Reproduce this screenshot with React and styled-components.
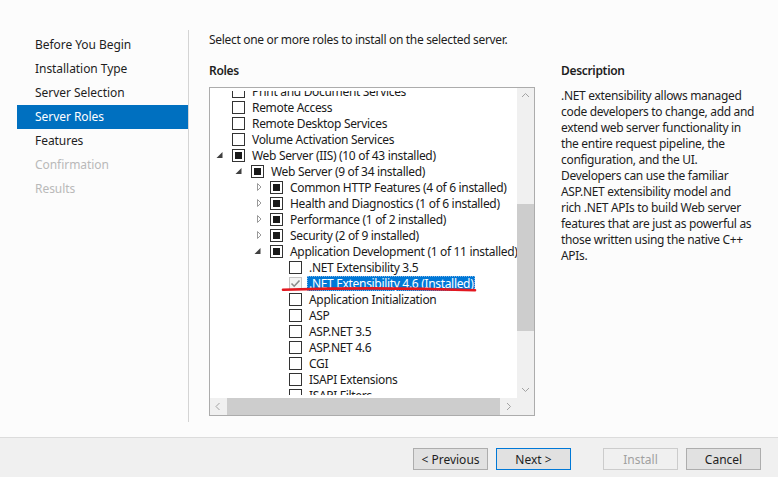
import styled, { createGlobalStyle } from "styled-components";

const GlobalStyle = createGlobalStyle`
  html, body {
    margin: 0;
    padding: 0;
  }
  body {
    background: #fcfcfc;
    font-family: "Noto Sans", "Liberation Sans", sans-serif;
    font-size: 12px;
    letter-spacing: -0.32px;
    color: #1e1e1e;
  }
`;

const steps = [
  { label: "Before You Begin" },
  { label: "Installation Type" },
  { label: "Server Selection" },
  { label: "Server Roles", active: true },
  { label: "Features" },
  { label: "Confirmation", disabled: true },
  { label: "Results", disabled: true },
];

// depth, expander ("open" | "closed" | none), check ("none" | "partial" | "done")
const roles = [
  { depth: 0, check: "none", label: "Print and Document Services" },
  { depth: 0, check: "none", label: "Remote Access" },
  { depth: 0, check: "none", label: "Remote Desktop Services" },
  { depth: 0, check: "none", label: "Volume Activation Services" },
  { depth: 0, exp: "open", check: "partial", label: "Web Server (IIS) (10 of 43 installed)" },
  { depth: 1, exp: "open", check: "partial", label: "Web Server (9 of 34 installed)" },
  { depth: 2, exp: "closed", check: "partial", label: "Common HTTP Features (4 of 6 installed)" },
  { depth: 2, exp: "closed", check: "partial", label: "Health and Diagnostics (1 of 6 installed)" },
  { depth: 2, exp: "closed", check: "partial", label: "Performance (1 of 2 installed)" },
  { depth: 2, exp: "closed", check: "partial", label: "Security (2 of 9 installed)" },
  { depth: 2, exp: "open", check: "partial", label: "Application Development (1 of 11 installed)" },
  { depth: 3, check: "none", label: ".NET Extensibility 3.5" },
  { depth: 3, check: "done", label: ".NET Extensibility 4.6 (Installed)", selected: true },
  { depth: 3, check: "none", label: "Application Initialization" },
  { depth: 3, check: "none", label: "ASP" },
  { depth: 3, check: "none", label: "ASP.NET 3.5" },
  { depth: 3, check: "none", label: "ASP.NET 4.6" },
  { depth: 3, check: "none", label: "CGI" },
  { depth: 3, check: "none", label: "ISAPI Extensions" },
  { depth: 3, check: "none", label: "ISAPI Filters" },
];

const description = [
  ".NET extensibility allows managed",
  "code developers to change, add and",
  "extend web server functionality in",
  "the entire request pipeline, the",
  "configuration, and the UI.",
  "Developers can use the familiar",
  "ASP.NET extensibility model and",
  "rich .NET APIs to build Web server",
  "features that are just as powerful as",
  "those written using the native C++",
  "APIs.",
];

function Expander({ kind }) {
  return (
    <ExpSlot>
      {kind === "open" && (
        <svg width="19" height="16" viewBox="0 0 19 16">
          <polygon points="9.5,5 9.5,11 3.5,11" fill="#404040" />
        </svg>
      )}
      {kind === "closed" && (
        <svg width="19" height="16" viewBox="0 0 19 16">
          <polygon points="6.5,4.5 10,8 6.5,11.5" fill="none" stroke="#9a9a9a" />
        </svg>
      )}
    </ExpSlot>
  );
}

function Chevron({ dir }) {
  const pts = {
    up: "5,9 8.5,5.5 12,9",
    down: "5,7 8.5,10.5 12,7",
    left: "9.5,5 6,8.5 9.5,12",
    right: "7,5 10.5,8.5 7,12",
  }[dir];
  return (
    <svg width="17" height="17" viewBox="0 0 17 17">
      <polyline points={pts} fill="none" stroke="#a3a3a3" strokeWidth="1" />
    </svg>
  );
}

export default function App() {
  return (
    <Page>
      <GlobalStyle />
      <Main>
        <Nav>
          {steps.map((s) => (
            <NavItem key={s.label} $active={s.active} $disabled={s.disabled}>
              {s.label}
            </NavItem>
          ))}
        </Nav>
        <Content>
          <Intro>Select one or more roles to install on the selected server.</Intro>
          <Columns>
            <RolesColumn>
              <Heading>Roles</Heading>
              <TreeBox>
                <Viewport>
                  <TreeList>
                    {roles.map((r) => (
                      <Row key={r.label} $depth={r.depth}>
                        <Expander kind={r.exp} />
                        <Check $state={r.check}>
                          {r.check === "partial" && <Fill />}
                          {r.check === "done" && (
                            <svg width="11" height="11" viewBox="0 0 11 11">
                              <polyline
                                points="1.5,5.5 4.2,8.2 9.5,2.5"
                                fill="none"
                                stroke="#8a8a8a"
                                strokeWidth="1.6"
                              />
                            </svg>
                          )}
                        </Check>
                        <Label $selected={r.selected}>{r.label}</Label>
                      </Row>
                    ))}
                  </TreeList>
                  <Scribble width="307" height="304" viewBox="0 0 307 304">
                    <path
                      d="M73 198.8 Q170 195.8 265 199.3"
                      fill="none"
                      stroke="#e3171f"
                      strokeWidth="2.6"
                      strokeLinecap="round"
                    />
                  </Scribble>
                </Viewport>
                <VScroll>
                  <Chevron dir="up" />
                  <VThumb />
                  <Chevron dir="down" />
                </VScroll>
                <HScroll>
                  <Chevron dir="left" />
                  <HThumb />
                  <Chevron dir="right" />
                </HScroll>
                <Corner />
              </TreeBox>
            </RolesColumn>
            <DescColumn>
              <Heading>Description</Heading>
              <DescBody>
                {description.map((line) => (
                  <DescLine key={line}>{line}</DescLine>
                ))}
              </DescBody>
            </DescColumn>
          </Columns>
        </Content>
      </Main>
      <Footer>
        <Button>&lt; Previous</Button>
        <Button $primary>Next &gt;</Button>
        <Button $disabled $spaced>
          Install
        </Button>
        <Button>Cancel</Button>
      </Footer>
    </Page>
  );
}

const Page = styled.div`
  width: 778px;
  height: 477px;
  display: flex;
  flex-direction: column;
  overflow: hidden;
`;

const Main = styled.div`
  height: 437px;
  display: flex;
`;

const Nav = styled.div`
  width: 172px;
  height: 392px;
  margin: 30px 0 0 17px;
  padding-top: 3px;
  box-sizing: border-box;
  border-right: 1px solid #d4d4d4;
  display: flex;
  flex-direction: column;
  flex: none;
`;

const NavItem = styled.div`
  height: 24px;
  line-height: 24px;
  padding-left: 18px;
  letter-spacing: -0.05px;
  white-space: nowrap;
  background: ${(p) => (p.$active ? "#0070c0" : "transparent")};
  color: ${(p) => (p.$active ? "#ffffff" : p.$disabled ? "#b9b9b9" : "#1e1e1e")};
`;

const Content = styled.div`
  flex: 1;
  padding: 32px 0 0 20px;
`;

const Intro = styled.div`
  line-height: 16px;
  white-space: nowrap;
`;

const Columns = styled.div`
  display: flex;
  margin-top: 15px;
`;

const RolesColumn = styled.div`
  width: 326px;
  flex: none;
  display: flex;
  flex-direction: column;
`;

const Heading = styled.div`
  line-height: 16px;
  font-weight: 600;
  margin-bottom: 8px;
`;

const TreeBox = styled.div`
  width: 326px;
  height: 329px;
  box-sizing: border-box;
  border: 1px solid #acacac;
  background: #ffffff;
  display: grid;
  grid-template-columns: 307px 17px;
  grid-template-rows: 310px 17px;
`;

const Viewport = styled.div`
  position: relative;
  overflow: hidden;
  margin: 3px 0;
`;

const TreeList = styled.div`
  margin-top: -8px;
  display: flex;
  flex-direction: column;
`;

const Row = styled.div`
  height: 16px;
  display: flex;
  align-items: center;
  padding-left: ${(p) => 3 + p.$depth * 19}px;
  white-space: nowrap;
`;

const ExpSlot = styled.div`
  width: 19px;
  height: 16px;
  flex: none;
  svg {
    display: block;
  }
`;

const Check = styled.div`
  width: 13px;
  height: 13px;
  box-sizing: border-box;
  flex: none;
  border: 1px solid ${(p) => (p.$state === "done" ? "#c4c4c4" : "#333333")};
  background: ${(p) => (p.$state === "done" ? "#f4f4f4" : "#ffffff")};
  display: flex;
  align-items: center;
  justify-content: center;
  svg {
    display: block;
  }
`;

const Fill = styled.div`
  width: 7px;
  height: 7px;
  background: #1a1a1a;
`;

const Label = styled.span`
  margin-left: 5px;
  padding: 0 2px;
  height: 15px;
  line-height: 15px;
  flex: none;
  color: ${(p) => (p.$selected ? "#ffffff" : "#1a1a1a")};
  background: ${(p) => (p.$selected ? "#0078d7" : "transparent")};
  outline: ${(p) => (p.$selected ? "1px dotted #7fb4e6" : "none")};
  outline-offset: -1px;
`;

const Scribble = styled.svg`
  position: absolute;
  left: 0;
  top: 0;
  pointer-events: none;
`;

const VScroll = styled.div`
  background: #f0f0f0;
  display: flex;
  flex-direction: column;
  svg {
    display: block;
    flex: none;
  }
`;

const VThumb = styled.div`
  width: 17px;
  height: 127px;
  margin-top: 99px;
  margin-bottom: auto;
  background: #cdcdcd;
`;

const HScroll = styled.div`
  background: #f0f0f0;
  display: flex;
  align-items: center;
  svg {
    display: block;
    flex: none;
  }
`;

const HThumb = styled.div`
  flex: 1;
  height: 17px;
  background: #cdcdcd;
`;

const Corner = styled.div`
  background: #f0f0f0;
`;

const DescColumn = styled.div`
  margin-left: 26px;
  display: flex;
  flex-direction: column;
`;

const DescBody = styled.div`
  margin-top: 1px;
  line-height: 16px;
`;

const DescLine = styled.div`
  white-space: nowrap;
`;

const Footer = styled.div`
  height: 40px;
  box-sizing: border-box;
  border-top: 1px solid #dcdcdc;
  background: #f0f0f0;
  display: flex;
  justify-content: flex-end;
  align-items: flex-start;
  gap: 8px;
  padding: 10px 17px 0 0;
`;

const Button = styled.button`
  width: 75px;
  height: 22px;
  box-sizing: border-box;
  margin-left: ${(p) => (p.$spaced ? "24px" : "0")};
  border: 1px solid
    ${(p) => (p.$primary ? "#0078d7" : p.$disabled ? "#cccccc" : "#adadad")};
  background: ${(p) => (p.$disabled ? "#f0f0f0" : "#e1e1e1")};
  color: ${(p) => (p.$disabled ? "#a0a0a0" : "#1e1e1e")};
  font-family: inherit;
  font-size: 12px;
  letter-spacing: 0;
  padding: 0;
`;
